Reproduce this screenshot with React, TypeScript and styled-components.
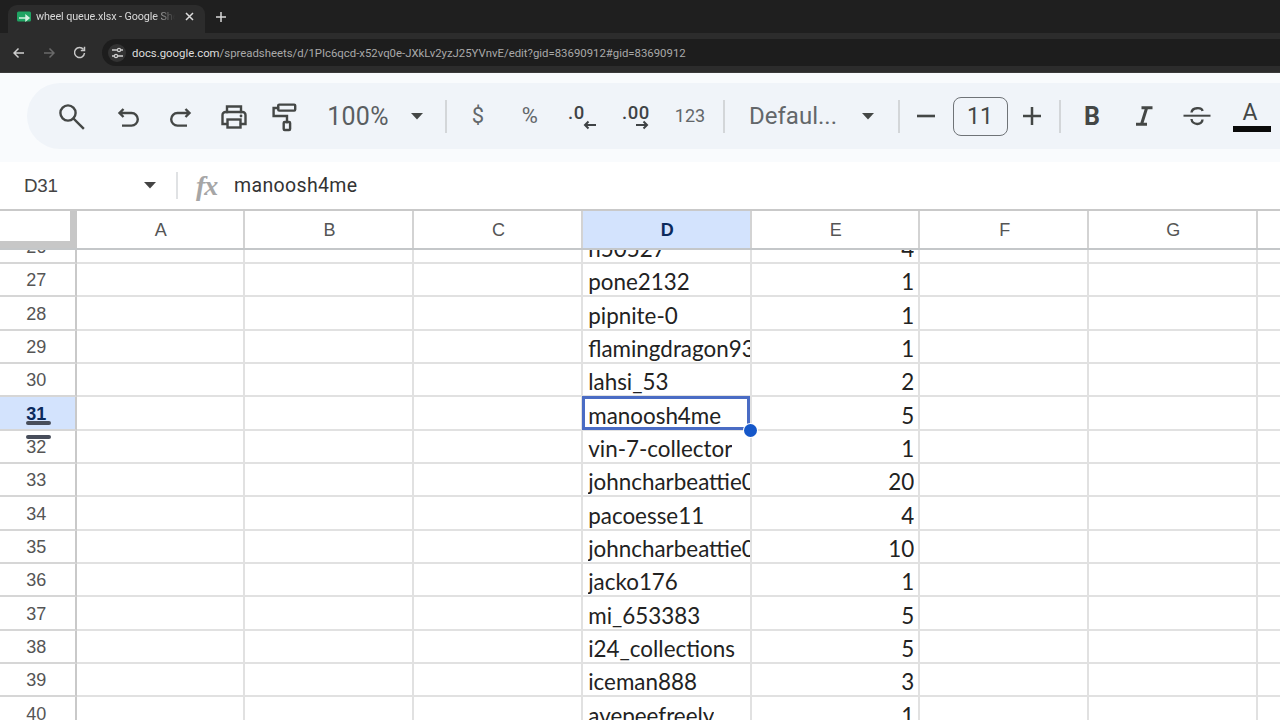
import React from "react";
import styled, { createGlobalStyle, css } from "styled-components";

const Global = createGlobalStyle`
  html, body { margin: 0; padding: 0; width: 1280px; height: 720px; overflow: hidden; background: #fff; }
  #root { width: 1280px; height: 720px; overflow: hidden; }
  * { box-sizing: border-box; }
`;

const Page = styled.div`
  width: 1280px; height: 720px; display: flex; flex-direction: column; overflow: hidden;
  font-family: "Liberation Sans", Arial, sans-serif; background: #fff;
`;

/* ---------- browser chrome ---------- */
const TabStrip = styled.div`
  height: 33px; background: #1f1f1f; display: flex; align-items: flex-end; padding-left: 8px; flex: none;
`;
const Tab = styled.div`
  width: 197px; height: 28px; flex: none; background: #2c2c2c; border-radius: 9px 9px 0 0;
  display: flex; align-items: center; padding: 0 0 5px 9px; color: #d8d8d8;
`;
const TabTitle = styled.span`
  font: 10.8px Roboto, sans-serif; margin-left: 5px; width: 139px; flex: none; white-space: nowrap; overflow: hidden;
  letter-spacing: -0.1px;
  -webkit-mask-image: linear-gradient(90deg, #000 85%, transparent 100%);
  mask-image: linear-gradient(90deg, #000 85%, transparent 100%);
`;
const TabClose = styled.span`
  display: flex; margin-left: 10px; flex: none;
`;
const NewTab = styled.span`
  display: flex; margin: 0 0 11px 11px; flex: none;
`;
const AddressBar = styled.div`
  height: 40px; background: #2c2c2c; display: flex; align-items: center; flex: none; border-bottom: 1px solid #3a3a3a;
`;
const NavButton = styled.span<{ $w: number }>`
  width: ${p => p.$w}px; display: flex; justify-content: center; flex: none;
`;
const UrlPill = styled.div`
  flex: 1; height: 27px; margin-left: 4px; margin-right: -40px; background: #1d1d1d; border-radius: 14px;
  display: flex; align-items: center; padding-left: 6px; white-space: nowrap;
  font: 11.36px Roboto, sans-serif; color: #a9a9a9;
`;
const SiteChip = styled.span`
  width: 18px; height: 18px; border-radius: 50%; background: #333; display: flex; align-items: center;
  justify-content: center; margin-right: 6px; flex: none;
`;
const Host = styled.span` color: #dedede; `;

/* ---------- toolbar ---------- */
const ToolbarArea = styled.div`
  height: 89px; flex: none; background: #f9fbfd; padding: 10px 0 13px 27px; display: flex;
`;
const Pill = styled.div`
  height: 66px; width: 1300px; flex: none; background: #f0f4f9; border-radius: 33px 0 0 33px;
  padding-left: 17px; display: flex; align-items: center; color: #444746;
`;
const Tool = styled.div<{ $w: number }>`
  width: ${p => p.$w}px; flex: none; display: flex; align-items: center; justify-content: center;
  position: relative; height: 34px;
`;
const ToolText = styled.span<{ $size: number; $ls?: number; $weight?: number; $color?: string; $up?: number }>`
  font-family: Roboto, sans-serif; font-size: ${p => p.$size}px; font-weight: ${p => p.$weight ?? 400};
  letter-spacing: ${p => p.$ls ?? 0}px; color: ${p => p.$color ?? "#5a5e61"}; line-height: 1; white-space: nowrap;
  margin-top: ${p => -(p.$up ?? 0)}px;
`;
const Divider = styled.span`
  width: 2px; height: 33px; background: #d3d6d9;
`;
const FontSizeBox = styled.div`
  width: 55px; height: 39px; border: 1.5px solid #6f7377; border-radius: 8px; display: flex;
  align-items: center; justify-content: center;
`;
const ColorBar = styled.span`
  position: absolute; left: 15px; top: 27px; width: 38px; height: 6px; background: #0a0a0a;
`;
const DecimalText = styled.span<{ $left: number }>`
  position: absolute; left: ${p => p.$left}px; top: 3px; font: 500 18.5px Roboto, sans-serif; color: #3f4346; letter-spacing: .5px;
`;
const DecimalArrow = styled.svg<{ $left: number }>`
  position: absolute; left: ${p => p.$left}px; top: 21px;
`;

/* ---------- formula bar ---------- */
const FormulaBar = styled.div`
  height: 47px; flex: none; background: #fff; display: flex; align-items: center; padding-left: 24px;
`;
const NameBox = styled.span`
  width: 120px; font: 18.8px "Liberation Sans", sans-serif; color: #444; letter-spacing: -.3px;
`;
const FormulaDivider = styled.span`
  width: 2px; height: 27px; background: #e0e2e4; margin: 0 18px 0 20px;
`;
const Fx = styled.span`
  font: italic 700 28px "Liberation Serif", serif; color: #a6a6a6; width: 38px; letter-spacing: -1px;
`;
const FormulaValue = styled.span`
  font: 19.5px Roboto, sans-serif; color: #333; letter-spacing: .35px;
`;

/* ---------- grid ---------- */
const Sheet = styled.div`
  flex: 1; position: relative; overflow: hidden; min-height: 0;
`;
const columns = css`
  display: grid; grid-template-columns: 76.5px repeat(8, 168.75px); grid-template-rows: minmax(0, 1fr);
`;
const HeaderRow = styled.div`
  ${columns}; height: 41px; border-top: 2px solid #c9c9c9; border-bottom: 2px solid #c4c7c9; background: #fff;
`;
const Corner = styled.div`
  border-right: 7px solid #c7c7c7; border-bottom: 7px solid #c7c7c7;
`;
const ColHead = styled.div<{ $active?: boolean }>`
  display: flex; align-items: center; justify-content: center; border-right: 2px solid #d3d3d3;
  padding: 1px 0 0 2px;
  font-size: 18px; color: ${p => (p.$active ? "#0b2a5c" : "#555")};
  font-weight: ${p => (p.$active ? 700 : 400)};
  background: ${p => (p.$active ? "#d3e3fd" : "#fff")};
`;
const Row = styled.div<{ $h: number }>`
  ${columns}; height: ${p => p.$h}px; overflow: ${p => (p.$h < 30 ? "hidden" : "visible")};
`;
const RowHead = styled.div<{ $active?: boolean }>`
  display: flex; align-items: flex-end; justify-content: center;
  border-right: 2px solid #c9c9c9; border-bottom: 2px solid #d6d6d6; padding-right: 2px;
  font-size: 18px; line-height: 30px; min-height: 0;
  color: ${p => (p.$active ? "#0b2a5c" : "#555")};
  font-weight: ${p => (p.$active ? 700 : 400)};
  background: ${p => (p.$active ? "#d3e3fd" : "#fff")};
  position: relative;
`;
const Cell = styled.div<{ $right?: boolean }>`
  display: flex; align-items: flex-end; position: relative; min-width: 0; min-height: 0;
  border-right: 2px solid #e1e1e1; border-bottom: 2px solid #e1e1e1;
  justify-content: ${p => (p.$right ? "flex-end" : "flex-start")};
  padding: ${p => (p.$right ? "0 4px 0 0" : "0 0 0 5.5px")};
  font: 22.4px Lato, "Open Sans", sans-serif; color: #222; line-height: 33px;
`;
const CellText = styled.span`
  display: block; flex: none; white-space: nowrap; overflow: hidden; max-width: 100%; margin-bottom: -3px;
`;
const Selection = styled.div`
  position: absolute; left: -1px; top: -1px; width: 168.5px; height: 34px; border: 3px solid #4a6cc4; z-index: 2;
`;
const FillHandle = styled.div`
  position: absolute; right: -9.5px; bottom: -10px; width: 13px; height: 13px; background: #1557c9; border-radius: 50%;
  box-shadow: 0 0 0 1px #fff;
`;
const ResizeBar = styled.span<{ $pos: "top" | "bottom" }>`
  position: absolute; left: 26px; width: 25px; height: 4px; border-radius: 2px; background: #474d5a; z-index: 3;
  ${p => (p.$pos === "bottom" ? "bottom: 4px;" : "top: 4px;")}
`;

const stroke = { fill: "none", stroke: "#444746", strokeWidth: 2.4, strokeLinecap: "square" as const };

const IconSearch = () => (
  <svg width="28" height="28" viewBox="0 0 28 28" style={{ overflow: "visible" }}>
    <circle cx="11" cy="11" r="7.6" {...stroke} />
    <path d="M16.5 16.5 L26 26" {...stroke} />
  </svg>
);
const IconUndo = ({ flip }: { flip?: boolean }) => (
  <svg width="28" height="28" viewBox="0 0 28 28" style={flip ? { transform: "scaleX(-1)" } : undefined}>
    <path d="M10.5 7 L6.5 11 L10.5 15 M7 11 H18.5 a6.3 6.3 0 0 1 0 12.6 H9" {...stroke} strokeLinecap="butt" />
  </svg>
);
const IconPrint = () => (
  <svg width="28" height="28" viewBox="0 0 28 28">
    <path d="M7 10 V4.5 H21 V10" {...stroke} />
    <path d="M7 22 H2.5 V13 a3 3 0 0 1 3-3 H22.5 a3 3 0 0 1 3 3 V22 H21" {...stroke} />
    <rect x="7.5" y="17.5" width="13" height="8" {...stroke} />
    <circle cx="21" cy="14" r="1.4" fill="#444746" />
  </svg>
);
const IconPaint = () => (
  <svg width="28" height="30" viewBox="0 0 28 30" style={{ overflow: "visible" }}>
    <rect x="7.2" y="3.6" width="17" height="6" rx="1" {...stroke} />
    <path d="M7 7 H2.6 V15 H16 V21" {...stroke} />
    <rect x="12.7" y="21" width="6.4" height="8" rx="1" {...stroke} />
  </svg>
);
const Caret = ({ c = "#444746" }: { c?: string }) => (
  <svg width="12" height="7" viewBox="0 0 14 8"><path d="M0 0 H14 L7 7.5 Z" fill={c} /></svg>
);
const ArrowSmall = ({ dir, left }: { dir: "l" | "r"; left: number }) => (
  <DecimalArrow $left={left} width="14" height="10" viewBox="0 0 14 10">
    {dir === "l" ? (
      <path d="M13 5 H2 M5.5 1.5 L2 5 L5.5 8.5" fill="none" stroke="#3f4346" strokeWidth="2" />
    ) : (
      <path d="M1 5 H12 M8.5 1.5 L12 5 L8.5 8.5" fill="none" stroke="#3f4346" strokeWidth="2" />
    )}
  </DecimalArrow>
);
const IconMinus = () => (
  <svg width="18" height="4" viewBox="0 0 18 4"><rect width="18" height="2.6" y="0.7" fill="#444746" /></svg>
);
const IconPlus = () => (
  <svg width="18" height="18" viewBox="0 0 18 18"><path d="M0 9 H18 M9 0 V18" stroke="#444746" strokeWidth="2.5" /></svg>
);
const IconItalic = () => (
  <svg width="18" height="20" viewBox="0 0 18 20">
    <path d="M6.5 1.7 H17.5 M1 18.3 H12 M11.6 2 L6.6 18" stroke="#444746" strokeWidth="3" fill="none" />
  </svg>
);
const IconStrike = () => (
  <svg width="28" height="22" viewBox="0 0 28 22">
    <path d="M0.5 10.7 H27.5" stroke="#444746" strokeWidth="2" />
    <path d="M8.5 7.5 C9 2 19 2 19.5 6" stroke="#444746" strokeWidth="2.4" fill="none" />
    <path d="M8.5 14 C9 20.5 19.5 20.5 19.5 14.5" stroke="#444746" strokeWidth="2.4" fill="none" />
  </svg>
);
const Favicon = () => (
  <svg width="14" height="11" viewBox="0 0 14 11" style={{ flex: "none" }}>
    <rect width="14" height="10" y="0.5" rx="1.5" fill="#1fa463" />
    <path d="M2 7 H9 M9 7 V4.5 L12 7 L9 9.5Z" stroke="#d6f2e2" strokeWidth="1.4" fill="#d6f2e2" />
  </svg>
);
const NavArrow = ({ dim, flip }: { dim?: boolean; flip?: boolean }) => (
  <svg width="12" height="12" viewBox="0 0 12 12" style={flip ? { transform: "scaleX(-1)" } : undefined}>
    <path d="M11 6 H1.5 M5.5 1.5 L1 6 L5.5 10.5" fill="none" stroke={dim ? "#6a6a6a" : "#cfcfcf"} strokeWidth="1.5" />
  </svg>
);
const IconReload = () => (
  <svg width="13" height="13" viewBox="0 0 13 13">
    <path d="M10.5 3.5 A5 5 0 1 0 11.5 7" fill="none" stroke="#c8c8c8" strokeWidth="1.5" />
    <path d="M11.5 0.8 V4.5 H7.8" fill="none" stroke="#c8c8c8" strokeWidth="1.5" />
  </svg>
);
const IconTune = () => (
  <svg width="13" height="12" viewBox="0 0 13 12">
    <path d="M1 3 H6 M10 3 H12 M1 9 H3 M7 9 H12" stroke="#cfcfcf" strokeWidth="1.3" />
    <circle cx="8" cy="3" r="1.6" fill="none" stroke="#cfcfcf" strokeWidth="1.2" />
    <circle cx="5" cy="9" r="1.6" fill="none" stroke="#cfcfcf" strokeWidth="1.2" />
  </svg>
);
const IconX = () => (
  <svg width="9" height="9" viewBox="0 0 9 9"><path d="M1 1 L8 8 M8 1 L1 8" stroke="#dcdcdc" strokeWidth="1.5" /></svg>
);
const IconAdd = () => (
  <svg width="10" height="10" viewBox="0 0 10 10"><path d="M0 5 H10 M5 0 V10" stroke="#d8d8d8" strokeWidth="1.5" /></svg>
);

const rows: [number, string, number, number][] = [
  [26, "n50527", 4, 14],
  [27, "pone2132", 1, 33.33],
  [28, "pipnite-0", 1, 33.33],
  [29, "flamingdragon93", 1, 33.33],
  [30, "lahsi_53", 2, 33.33],
  [31, "manoosh4me", 5, 33.33],
  [32, "vin-7-collector", 1, 33.33],
  [33, "johncharbeattie0", 20, 33.33],
  [34, "pacoesse11", 4, 33.33],
  [35, "johncharbeattie0", 10, 33.33],
  [36, "jacko176", 1, 33.33],
  [37, "mi_653383", 5, 33.33],
  [38, "i24_collections", 5, 33.33],
  [39, "iceman888", 3, 33.33],
  [40, "avepeefreely", 1, 33.33],
];
const letters = ["A", "B", "C", "D", "E", "F", "G", "H"];
const blanks = (n: number) => Array.from({ length: n }, (_, i) => <Cell key={i} />);

export default function App() {
  return (
    <Page>
      <Global />
      <TabStrip>
        <Tab>
          <Favicon />
          <TabTitle>wheel queue.xlsx - Google Sheets</TabTitle>
          <TabClose><IconX /></TabClose>
        </Tab>
        <NewTab><IconAdd /></NewTab>
      </TabStrip>
      <AddressBar>
        <NavButton $w={38}><NavArrow /></NavButton>
        <NavButton $w={22}><NavArrow dim flip /></NavButton>
        <NavButton $w={38}><IconReload /></NavButton>
        <UrlPill>
          <SiteChip><IconTune /></SiteChip>
          <Host>docs.google.com</Host>/spreadsheets/d/1PIc6qcd-x52vq0e-JXkLv2yzJ25YVnvE/edit?gid=83690912#gid=83690912
        </UrlPill>
      </AddressBar>

      <ToolbarArea>
        <Pill>
          <Tool $w={54}><IconSearch /></Tool>
          <Tool $w={58}><IconUndo /></Tool>
          <Tool $w={51}><IconUndo flip /></Tool>
          <Tool $w={53}><IconPrint /></Tool>
          <Tool $w={50}><IconPaint /></Tool>
          <Tool $w={96}><ToolText $size={25} $ls={0.3}>100%</ToolText></Tool>
          <Tool $w={22}><Caret /></Tool>
          <Tool $w={36}><Divider /></Tool>
          <Tool $w={28}><ToolText $size={22} $color="#63676a">$</ToolText></Tool>
          <Tool $w={76}><ToolText $size={22} $ls={0.5} $color="#63676a">%</ToolText></Tool>
          <Tool $w={30}>
            <DecimalText $left={0}>.0</DecimalText>
            <ArrowSmall dir="l" left={15} />
          </Tool>
          <Tool $w={74}>
            <DecimalText $left={24}>.00</DecimalText>
            <ArrowSmall dir="r" left={37} />
          </Tool>
          <Tool $w={36}><ToolText $size={18} $color="#63676a">123</ToolText></Tool>
          <Tool $w={32}><Divider /></Tool>
          <Tool $w={106}><ToolText $size={24} $color="#63676a">Defaul...</ToolText></Tool>
          <Tool $w={44}><Caret /></Tool>
          <Tool $w={18}><Divider /></Tool>
          <Tool $w={36}><IconMinus /></Tool>
          <Tool $w={72}><FontSizeBox><ToolText $size={23} $color="#444746">11</ToolText></FontSizeBox></Tool>
          <Tool $w={32}><IconPlus /></Tool>
          <Tool $w={24}><Divider /></Tool>
          <Tool $w={40}><ToolText $size={25} $weight={700} $color="#444746">B</ToolText></Tool>
          <Tool $w={64}><IconItalic /></Tool>
          <Tool $w={42}><IconStrike /></Tool>
          <Tool $w={64}>
            <ToolText $size={23} $color="#444746" $up={8}>A</ToolText>
            <ColorBar />
          </Tool>
        </Pill>
      </ToolbarArea>

      <FormulaBar>
        <NameBox>D31</NameBox>
        <Caret c="#444" />
        <FormulaDivider />
        <Fx>fx</Fx>
        <FormulaValue>manoosh4me</FormulaValue>
      </FormulaBar>

      <Sheet>
        <HeaderRow>
          <Corner />
          {letters.map(l => <ColHead key={l} $active={l === "D"}>{l}</ColHead>)}
        </HeaderRow>
        {rows.map(([n, name, val, h]) => (
          <Row key={n} $h={h}>
            <RowHead $active={n === 31}>
              {n}
              {n === 31 && <ResizeBar $pos="bottom" />}
              {n === 32 && <ResizeBar $pos="top" />}
            </RowHead>
            {blanks(3)}
            <Cell>
              <CellText>{name}</CellText>
              {n === 31 && <Selection><FillHandle /></Selection>}
            </Cell>
            <Cell $right><CellText>{val}</CellText></Cell>
            {blanks(3)}
          </Row>
        ))}
      </Sheet>
    </Page>
  );
}
